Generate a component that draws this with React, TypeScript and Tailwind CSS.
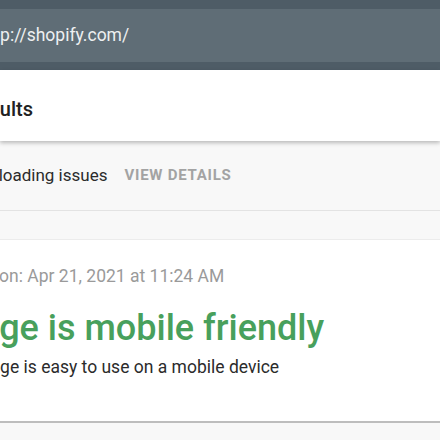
import React from 'react';

const font = { fontFamily: 'Roboto, "Liberation Sans", sans-serif' };

const App: React.FC = () => {
  return (
    <div className="w-[440px] h-[440px] overflow-hidden bg-[#f8f8f8]" style={font}>
      {/* Address bar */}
      <div className="bg-[#4e5c66] pt-[9px] pb-[8px]">
        <div className="h-[53px] bg-[#5f6d76] flex items-center">
          <span className="-ml-[21px] text-[17.5px] text-[#eef0f1] whitespace-nowrap">http://shopify.com/</span>
        </div>
      </div>

      {/* Results header */}
      <div className="h-[71px] bg-white flex items-center shadow-[0_2px_4px_rgba(0,0,0,0.25)] relative">
        <h1 className="-ml-[72px] mt-[6px] text-[20px] font-medium text-[#212121] whitespace-nowrap">Test results</h1>
      </div>

      {/* Loading issues */}
      <div className="h-[70px] flex items-center gap-[17px] border-b border-[#e3e3e3]">
        <span className="-ml-[44px] text-[17px] text-[#2b2b2b] whitespace-nowrap">Page loading issues</span>
        <button className="text-[15px] font-bold tracking-[0.05em] text-[#a3a3a3] uppercase">View details</button>
      </div>

      <div className="h-[29px] border-b border-[#ececec]" />

      {/* Result card */}
      <div className="h-[183px] bg-white border-b-2 border-[#bdbdbd] pt-[23px]">
        <p className="-ml-[58px] text-[17.5px] text-[#9a9a9a] whitespace-nowrap">Tested on: Apr 21, 2021 at 11:24 AM</p>
        <h2 className="-ml-[43px] mt-[17px] text-[36px] leading-[44px] font-medium text-[#48a05c] whitespace-nowrap">Page is mobile friendly</h2>
        <p className="-ml-[57px] mt-[4px] text-[17.5px] text-[#2b2b2b] whitespace-nowrap">This page is easy to use on a mobile device</p>
      </div>
    </div>
  );
};

export default App;
